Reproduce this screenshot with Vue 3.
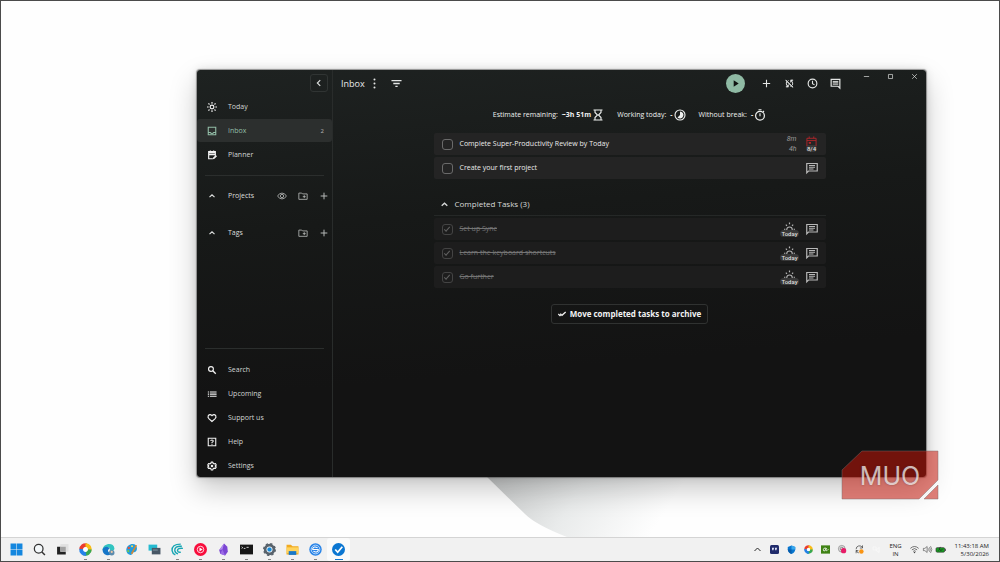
<template>
  <div class="desktop">
    <div class="desktop__area">
      <svg class="wallpaper" viewBox="0 0 240 62" aria-hidden="true">
        <defs>
          <linearGradient id="fold" gradientUnits="userSpaceOnUse" x1="10" y1="0" x2="150" y2="90">
            <stop offset="0" stop-color="#c6c8c8" />
            <stop offset="0.5" stop-color="#e9ebeb" />
            <stop offset="1" stop-color="#fefefe" />
          </linearGradient>
        </defs>
        <path d="M4 0L44 39Q55 50 86 62H240V0Z" fill="url(#fold)" />
      </svg>

      <div class="window">
        <aside class="sidebar">
          <div class="sidebar__top">
            <button type="button" class="collapse" aria-label="Collapse"><Icon name="left" /></button>
          </div>

          <nav class="nav">
            <a
              v-for="item in mainNav"
              :key="item.label"
              href="#"
              class="nav__item"
              :class="{ 'nav__item--active': item.active }"
            >
              <Icon :name="item.icon" />
              <span class="nav__label">{{ item.label }}</span>
              <span v-if="item.count" class="nav__count">{{ item.count }}</span>
            </a>
          </nav>

          <div class="divider"></div>

          <div v-for="group in groups" :key="group.label" class="group">
            <button type="button" class="group__toggle">
              <Icon name="up" />
              <span class="nav__label">{{ group.label }}</span>
            </button>
            <button v-for="a in group.actions" :key="a" type="button" class="group__action" :aria-label="a">
              <Icon :name="a" />
            </button>
          </div>

          <div class="sidebar__spacer"></div>
          <div class="divider"></div>

          <nav class="nav">
            <a v-for="item in bottomNav" :key="item.label" href="#" class="nav__item">
              <Icon :name="item.icon" />
              <span class="nav__label">{{ item.label }}</span>
            </a>
          </nav>
        </aside>

        <main class="main">
          <header class="header">
            <h1 class="header__title">Inbox</h1>
            <button type="button" class="header__btn header__btn--narrow" aria-label="More"><Icon name="dots" /></button>
            <button type="button" class="header__btn" aria-label="Filter"><Icon name="filter" /></button>
            <div class="header__spacer"></div>
            <button type="button" class="play" aria-label="Start tracking"><Icon name="play" /></button>
            <button v-for="a in headerActions" :key="a" type="button" class="header__btn" :aria-label="a">
              <Icon :name="a" />
            </button>
            <div class="controls">
              <button v-for="c in windowControls" :key="c" type="button" class="controls__btn" :aria-label="c">
                <Icon :name="c" />
              </button>
            </div>
          </header>

          <div class="content">
            <div class="stats">
              <div v-for="s in stats" :key="s.label" class="stat">
                <span>{{ s.label }}</span>
                <span class="stat__value"><b>{{ s.value }}</b><Icon :name="s.icon" /></span>
              </div>
            </div>

            <div class="tasks">
              <div v-for="task in tasks" :key="task.title" class="task">
                <label class="task__label">
                  <input type="checkbox" class="task__check" />
                  <span>{{ task.title }}</span>
                </label>
                <div v-if="task.spent" class="task__time">
                  <span>{{ task.spent }}</span>
                  <span>{{ task.estimate }}</span>
                </div>
                <button v-if="task.due" type="button" class="badge badge--due">
                  <Icon name="calendar" />
                  <span class="badge__text">{{ task.due }}</span>
                </button>
                <button v-else type="button" class="task__note" aria-label="Notes"><Icon name="note" /></button>
              </div>
            </div>

            <button type="button" class="done-toggle">
              <Icon name="up" />
              <span>Completed Tasks ({{ doneTasks.length }})</span>
            </button>

            <div class="tasks tasks--done">
              <div v-for="title in doneTasks" :key="title" class="task task--done">
                <label class="task__label">
                  <input type="checkbox" class="task__check" checked />
                  <span>{{ title }}</span>
                </label>
                <button type="button" class="badge">
                  <Icon name="sunrise" />
                  <span class="badge__text">Today</span>
                </button>
                <button type="button" class="task__note" aria-label="Notes"><Icon name="note" /></button>
              </div>
            </div>

            <button type="button" class="archive">
              <Icon name="doneAll" />
              <span>Move completed tasks to archive</span>
            </button>
          </div>
        </main>
      </div>

      <div class="logo">
        <svg class="logo__shape" viewBox="0 0 98 52" aria-hidden="true">
          <path d="M21 1H97V30L78 49H1V20Z" fill="#c41408" fill-opacity="0.54" stroke="#7b6a6a" stroke-opacity="0.45" />
          <path d="M97 35V49H83Z" fill="#c41408" fill-opacity="0.54" stroke="#7b6a6a" stroke-opacity="0.45" />
        </svg>
        <span class="logo__text">MUO</span>
      </div>
    </div>

    <footer class="taskbar">
      <button
        v-for="app in apps"
        :key="app.name"
        type="button"
        class="app"
        :class="{ 'app--open': app.open, 'app--active': app.active }"
        :aria-label="app.name"
      >
        <Icon :name="app.name" />
      </button>
      <div class="taskbar__spacer"></div>
      <button v-for="t in tray" :key="t" type="button" class="tray" :aria-label="t"><Icon :name="t" /></button>
      <div class="lang"><span>ENG</span><span>IN</span></div>
      <Icon v-for="s in system" :key="s" :name="s" class="system" />
      <div class="clock"><span>11:43:18 AM</span><span>5/30/2026</span></div>
    </footer>
  </div>
</template>

<script setup>
import { h } from 'vue'

const mainNav = [
  { label: 'Today', icon: 'sun' },
  { label: 'Inbox', icon: 'inbox', active: true, count: 2 },
  { label: 'Planner', icon: 'planner' },
]

const groups = [
  { label: 'Projects', actions: ['eye', 'folder', 'plus'] },
  { label: 'Tags', actions: ['folder', 'plus'] },
]

const bottomNav = [
  { label: 'Search', icon: 'search' },
  { label: 'Upcoming', icon: 'list' },
  { label: 'Support us', icon: 'heart' },
  { label: 'Help', icon: 'help' },
  { label: 'Settings', icon: 'gear' },
]

const headerActions = ['plus', 'syncOff', 'clock', 'comment']
const windowControls = ['minimize', 'maximize', 'close']

const stats = [
  { label: 'Estimate remaining:', value: '~3h 51m', icon: 'hourglass' },
  { label: 'Working today:', value: '-', icon: 'timelapse' },
  { label: 'Without break:', value: '-', icon: 'timer' },
]

const tasks = [
  { title: 'Complete Super-Productivity Review by Today', spent: '8m', estimate: '4h', due: '8/4' },
  { title: 'Create your first project' },
]

const doneTasks = ['Set up Sync', 'Learn the keyboard shortcuts', 'Go further']

const apps = [
  { name: 'start' },
  { name: 'find' },
  { name: 'taskView' },
  { name: 'chromatic', open: true },
  { name: 'edge', open: true },
  { name: 'paint' },
  { name: 'remote' },
  { name: 'waves', open: true },
  { name: 'music', open: true },
  { name: 'crystal', open: true },
  { name: 'terminal', open: true },
  { name: 'settings', open: true },
  { name: 'explorer', open: true },
  { name: 'syncBlue', open: true },
  { name: 'tick', open: true, active: true },
]

const tray = ['trayUp', 'quote', 'shield', 'chromatic', 'script', 'record', 'update', 'ghost']
const system = ['wifi', 'volume', 'battery']

const line = (d, width = 2) => `<path d="${d}" fill="none" stroke="currentColor" stroke-width="${width}"/>`
const fill = (d, color = 'currentColor') => `<path d="${d}" fill="${color}"/>`

// All icons share a 24 x 24 grid
const icons = {
  left: line('M15 5L8 12L15 19', 2.8),
  up: line('M4.500 15.500L12 8.500L19.500 15.500', 3.6),
  sun: '<circle cx="12" cy="12" r="4.500" fill="none" stroke="currentColor" stroke-width="2.800"/>' +
    line('M12 0V4M12 20V24M0 12H4M20 12H24M3.500 3.500L6 6M18 18L20.500 20.500M3.500 20.500L6 18M18 6L20.500 3.500', 2.8),
  inbox: line('M3 3H21V21H3ZM3 15.500H8Q9 18 12 18Q15 18 16 15.500H21', 2.6),
  planner: line('M14 21H4V4H20V14M4 7H20M4 11H20M8 1V5M16 1V5', 2.8) + fill('M14 22L15 18L21 12L24 15L18 21Z'),
  eye: line('M1.500 12Q5 5 12 5Q19 5 22.500 12Q19 19 12 19Q5 19 1.500 12Z') +
    '<circle cx="12" cy="12" r="4" fill="none" stroke="currentColor" stroke-width="2"/>',
  folder: line('M2 5H9L11 7H22V20H2ZM15 10V17M11.500 13.500H18.500'),
  plus: line('M12 4V20M4 12H20', 2.4),
  search: '<circle cx="9.500" cy="9.500" r="5.800" fill="none" stroke="currentColor" stroke-width="2.800"/>' + line('M14 14L21 21', 3.2),
  list: fill('M2 6H5V8.500H2ZM2 11H5V13.500H2ZM2 16H5V18.500H2ZM7 6H23V8.500H7ZM7 11H23V13.500H7ZM7 16H23V18.500H7Z'),
  heart: line('M12 20.500L5 14Q1 10 3 6.500Q7 1.500 12 6.500Q17 1.500 21 6.500Q23 10 19 14Z', 2.8),
  help: line('M3 3H21V21H3ZM9 9.500Q9 7 12 7Q15 7 15 9.500Q15 11 12 13V14.500M12 16V18.500', 2.6),
  gear: '<path fill="none" stroke="currentColor" stroke-width="2.800" stroke-linejoin="round" d="M10 2.500H14L14.600 5.500L17.300 7L20.200 6L22.200 9.500L20 11.500V12.500L22.200 14.500L20.200 18L17.300 17L14.600 18.500L14 21.500H10L9.400 18.500L6.700 17L3.800 18L1.800 14.500L4 12.500V11.500L1.800 9.500L3.800 6L6.700 7L9.400 5.500Z"/><circle cx="12" cy="12" r="3" fill="currentColor"/>',
  dots: '<g fill="currentColor"><circle cx="12" cy="3.500" r="2.200"/><circle cx="12" cy="12" r="2.200"/><circle cx="12" cy="20.500" r="2.200"/></g>',
  filter: line('M1 5.500H23M5 12H19M9.500 18.500H14.500', 2.8),
  play: fill('M8 5V19L19 12Z'),
  syncOff: fill('M10 6.350V4.260c-.8.210-1.550.540-2.230.960l1.460 1.460c.250-.120.500-.240.770-.330zM2.860 5.410l2.360 2.360C4.450 8.990 4 10.440 4 12c0 2.210.910 4.200 2.360 5.640L4 20h6v-6l-2.240 2.240C6.680 15.150 6 13.660 6 12c0-1 .250-1.940.680-2.770l8.080 8.080c-.250.130-.500.250-.770.340v2.090c.800-.210 1.550-.540 2.230-.960l2.360 2.360 1.270-1.270L4.140 4.140zM20 4h-6v6l2.240-2.240C17.320 8.850 18 10.340 18 12c0 1-.250 1.940-.680 2.770l1.460 1.460C19.550 15.010 20 13.560 20 12c0-2.210-.910-4.200-2.360-5.640L20 4z') +
    line('M4 4L20 20M9 14V19H4M15 10V5H20', 1.6),
  clock: '<circle cx="12" cy="12" r="9.500" fill="none" stroke="currentColor" stroke-width="2.500"/>' + line('M12 6V12.500L16.500 15', 2.4),
  comment: line('M2.500 3H21.500V22L17.500 18H2.500Z', 2.6) + line('M6 7.500H18M6 10.500H18M6 13.500H18', 2),
  minimize: line('M3 12H21', 2.4),
  maximize: line('M5 5H19V19H5Z', 2.4),
  close: line('M4 4L20 20M20 4L4 20', 2.4),
  hourglass: line('M3 2H21M3 22H21M6 2V7L11 12L6 17V22M18 2V7L13 12L18 17V22', 2.2),
  timelapse: '<circle cx="12" cy="12" r="10" fill="none" stroke="currentColor" stroke-width="2.200"/>' + fill('M12 5A7 7 0 1 1 7 17L12 12Z'),
  timer: '<circle cx="12" cy="13.500" r="8.800" fill="none" stroke="currentColor" stroke-width="2.400"/>' + line('M9 1.500H15M12 8.500V14.500M18 6L20 4', 2.2),
  calendar: line('M2 5H22V22H2ZM2 10H22M7 1V5M17 1V5', 2) + fill('M6 13H11V17H6Z'),
  note: line('M1.500 21.500V3H22.500V18H5Z', 2.4) + line('M6 7H18M6 10.500H18M6 14H15', 2),
  sunrise: line('M6 21V19A6 6 0 0 1 18 19V21', 2.4) +
    line('M12 3V7M4 8L6.500 10.500M20 8L17.500 10.500M0 18H3M21 18H24', 2.6),
  doneAll: line('M1 12L6 17L9 14M7 11L12 16L23 6', 3.8),

  start: fill('M1 1H11.500V11.500H1ZM12.500 1H23V11.500H12.500ZM1 12.500H11.500V23H1ZM12.500 12.500H23V23H12.500Z', '#1487df'),
  find: '<circle cx="10.500" cy="10.500" r="8" fill="#f4f8fa" stroke="#333" stroke-width="2.300"/><path d="M16.500 16.500L22 22" stroke="#333" stroke-width="2.800"/>',
  taskView: fill('M8 2H23V16H8Z', '#e1e1e1') + fill('M2 7H8V16H18V21H2Z', '#222') + fill('M8 7H18V16H8Z', '#a2a2a2'),
  chromatic: '<g fill="none" stroke-width="7"><path d="M4 12A8 8 0 0 1 14 4.200" stroke="#eb3c2f"/><path d="M12 4A8 8 0 0 1 19 16" stroke="#f9bc17"/><path d="M20 12A8 8 0 0 1 9 19.400" stroke="#37a852"/><path d="M13 20A8 8 0 0 1 4 11" stroke="#2482e8"/></g><circle cx="12" cy="12" r="4" fill="#fff"/>',
  edge: fill('M1 13C1 0 22-3 23 10C23 14 18 16 14 14C17 9 10 6 6 9Z', '#32c4c0') +
    fill('M1 12C4 5 13 6 14 11C10 11 10 17 15 18Q18 19 21 17C15 26 1 24 1 12Z', '#1676c8') +
    '<circle cx="18" cy="18" r="5" fill="#5b8bae"/><circle cx="18" cy="16.500" r="2" fill="#ecc6a5"/>',
  paint: fill('M12 2C24 0 25 16 17 17C13 17 15 22 10 22C0 21-1 5 12 2Z', '#219cdf') +
    '<circle cx="7" cy="9" r="2.200" fill="#e9533a"/><circle cx="13" cy="6" r="2" fill="#f9d64a"/><circle cx="6" cy="15" r="2" fill="#70c84f"/>' +
    '<path d="M21 4L12 20" stroke="#d48733" stroke-width="3"/>',
  remote: fill('M1 3H17V14H1Z', '#25bad0') + fill('M7 9H23V21H7Z', '#485765') + fill('M9 12H18V14H9Z', '#7a929f'),
  waves: '<g fill="none" stroke="#16a5b3" stroke-width="2.600"><path d="M18 2Q1 2 2 14Q3 20 8 22"/><path d="M20 6Q6 5 7 14Q8 19 13 20"/><path d="M22 10Q12 9 12 14Q13 18 18 17"/></g>',
  music: '<circle cx="12" cy="12" r="12" fill="#f80d3c"/><circle cx="12" cy="12" r="6" fill="none" stroke="#fff" stroke-width="1.500"/>' + fill('M10 8.500L16 12L10 15.500Z', '#fff'),
  crystal: fill('M13 1L19 7L20 16L15 23L6 20L4 13Z', '#7b46d3') + fill('M13 1L10 12L4 13Z', '#b18bef') + fill('M10 12L15 23L6 20Z', '#9b6ce6'),
  terminal: fill('M0 3H24V21H0Z', '#171717') + '<path d="M3 7L5 8.500L3 10M7 10H10M12 8H16" fill="none" stroke="#eee" stroke-width="1.600"/>',
  settings: '<circle cx="12" cy="12" r="8" fill="none" stroke="#59636c" stroke-width="5"/><circle cx="12" cy="12" r="10.500" fill="none" stroke="#59636c" stroke-width="3" stroke-dasharray="4.200 4.050"/><circle cx="12" cy="12" r="5" fill="#c9e2f3"/><circle cx="12" cy="12" r="3.800" fill="#168bdb"/>',
  explorer: fill('M1 3H9L12 6H23V21H1Z', '#f1aa20') + fill('M1 8H23V19H1Z', '#ffd35c') + fill('M5 15H19V22H5Z', '#1978c8'),
  syncBlue: '<circle cx="12" cy="12" r="11.500" fill="#2783e8"/><g fill="none" stroke="#fff" stroke-width="2"><circle cx="12" cy="12" r="8" stroke-width="1.200"/><path d="M6.500 11Q9 5 16 9M17.500 13Q15 19 8 15M6 12H18"/></g>',
  tick: '<circle cx="12" cy="12" r="12" fill="#0b76d1"/><path d="M6 12L10.500 17L19 7" fill="none" stroke="#fff" stroke-width="3.200"/>',

  trayUp: line('M4 16L12 8L20 16', 2.6),
  quote: '<rect width="24" height="24" rx="4" fill="#202b6b"/>' + fill('M5 7H11L9 14H6ZM13 7H19L17 14H14Z', '#dce0f6'),
  shield: fill('M12 1L22 5V12Q21 20 12 24Q3 20 2 12V5Z', '#0876cf') + fill('M12 1L22 5V12H12Z', '#38a8ee') + fill('M2 12H12V24Q3 20 2 12Z', '#075cab'),
  script: '<rect y="1" width="24" height="22" fill="#3f8214"/><path d="M13 8Q6 7 6 13Q7 18 11 15L14 8Q12 17 16 15L20 11" fill="none" stroke="#fff" stroke-width="2"/>',
  record: '<circle cx="10" cy="10" r="9" fill="#ddd" stroke="#777" stroke-width="1.600"/><circle cx="10" cy="10" r="4" fill="none" stroke="#777" stroke-width="2"/><circle cx="15" cy="15" r="7" fill="#e71c67"/>',
  update: '<path d="M3 11A9 9 0 0 1 20 7M20 1V8H13M3 13A9 9 0 0 0 10 21M3 22V15H9" fill="none" stroke="#444" stroke-width="2"/><circle cx="17" cy="17" r="6" fill="#f99413"/>',
  ghost: '<path d="M3 5H11V13H3ZM11 14L19 6V20L11 14" fill="none" stroke="#fafafa" stroke-width="2"/>',
  wifi: '<g fill="none" stroke="#444" stroke-width="2"><path d="M1 9Q12-1 23 9M5 13Q12 6 19 13M8.500 17Q12 13.500 15.500 17"/></g><circle cx="12" cy="20" r="2" fill="#444"/>',
  volume: '<path d="M1 9H5L11 4V20L5 15H1ZM14 9Q17 12 14 15M17 6Q22 12 17 18M20 3Q27 12 20 21" fill="none" stroke="#555" stroke-width="1.800"/>',
  battery: '<rect x="0" y="7" width="23" height="12" rx="3" fill="#169d20" stroke="#333" stroke-width="1.800"/><path d="M25 10V16M8 11L12 5M6 15L10 11L13 15L18 10" fill="none" stroke="#222" stroke-width="2"/>',
}

function Icon(props) {
  return h('svg', { viewBox: '0 0 24 24', class: 'icon', 'aria-hidden': 'true', innerHTML: icons[props.name] })
}
Icon.props = ['name']
</script>

<style>
body {
  margin: 0;
  background: #fff;
}
</style>

<style scoped>
.desktop {
  display: flex;
  flex-direction: column;
  box-sizing: border-box;
  height: 100vh;
  border: 1px solid #4b4b4b;
  font-family: "Open Sans", "Noto Sans", sans-serif;
  font-size: 7px;
  line-height: 10px;
  color: #dcdedd;
  background: #fefefe;
}

.desktop__area {
  position: relative;
  flex: 1;
  min-height: 0;
}

.wallpaper {
  position: absolute;
  left: 480px;
  bottom: 0;
  width: 240px;
  height: 62px;
}

button {
  display: inline-flex;
  align-items: center;
  justify-content: center;
  padding: 0;
  border: 0;
  background: none;
  color: inherit;
  font: inherit;
  cursor: pointer;
}

.icon {
  display: block;
  flex-shrink: 0;
  width: 10px;
  height: 10px;
  overflow: visible;
}

.window {
  position: absolute;
  top: 69px;
  left: 196px;
  right: 73px;
  bottom: 60px;
  display: flex;
  border-radius: 3px;
  background: linear-gradient(175deg, #1e2221 0, #171918 35%, #131313 70%);
  box-shadow: 0 0 1px 1px rgba(60, 60, 60, 0.5), 0 12px 28px rgba(0, 0, 0, 0.22), 0 0 10px rgba(0, 0, 0, 0.12);
}

.sidebar {
  display: flex;
  flex-direction: column;
  box-sizing: border-box;
  width: 136px;
  border-right: 1px solid #292c2b;
}

.sidebar__top {
  display: flex;
  justify-content: flex-end;
  padding: 4px 4px 3px;
}

.collapse {
  box-sizing: border-box;
  width: 18px;
  height: 18px;
  border: 1px solid #303433;
  border-radius: 3px;
}

.nav {
  display: flex;
  flex-direction: column;
  gap: 1px;
}

.nav__item {
  display: flex;
  align-items: center;
  height: 23px;
  padding: 0 8px 0 10px;
  border-radius: 3px;
  color: #d2d5d4;
  text-decoration: none;
}

.nav__item .icon {
  color: #f2f2f2;
}

.nav__item--active {
  background: #2c2f2e;
}

.nav__item--active .nav__label,
.nav__item--active .icon {
  color: #93bea8;
}

.nav__label {
  flex: 1;
  margin-left: 11px;
  text-align: left;
}

.nav__count {
  font-size: 6px;
  color: #b4b7b6;
}

.divider {
  height: 1px;
  margin: 9px 8px;
  background: #2b2e2d;
}

.group {
  display: flex;
  align-items: center;
  height: 22px;
  margin-bottom: 15px;
  padding: 0 3px 0 10px;
}

.group__toggle {
  flex: 1;
}

.group__toggle .icon {
  width: 8px;
  height: 8px;
  margin: 0 1px;
}

.group__action {
  width: 11px;
  margin-left: 10px;
  color: #b4b7b6;
}

.sidebar__spacer {
  flex: 1;
}

.main {
  flex: 1;
  min-width: 0;
}

.header {
  display: flex;
  align-items: center;
  height: 27px;
  padding-left: 8px;
}

.header__title {
  margin: 0;
  font-size: 9px;
  font-weight: 500;
  line-height: 12px;
  color: #ebedec;
}

.header__btn {
  width: 23px;
  color: #e4e6e5;
}

.header__btn .icon {
  width: 11px;
  height: 11px;
}

.header__btn--narrow {
  width: 20px;
}

.header__spacer {
  flex: 1;
}

.play {
  width: 19px;
  height: 19px;
  margin-right: 10px;
  border-radius: 50%;
  background: #8fbaa4;
  color: #101312;
}

.play .icon {
  width: 11px;
  height: 11px;
}

.controls {
  display: flex;
  align-self: flex-start;
  margin-left: 7px;
}

.controls__btn {
  width: 24px;
  height: 12px;
}

.controls__btn .icon {
  width: 7px;
  height: 7px;
}

.content {
  display: flex;
  flex-direction: column;
  align-items: center;
  max-width: 392px;
  margin: 0 auto;
}

.stats {
  display: flex;
  align-items: center;
  gap: 13px;
  height: 36px;
  color: #eff1f0;
}

.stat {
  display: flex;
  align-items: center;
  gap: 4px;
}

.stat__value {
  display: flex;
  align-items: center;
  gap: 1px;
}

.stat .icon {
  width: 12px;
  height: 12px;
}

.tasks {
  display: flex;
  flex-direction: column;
  gap: 2px;
  width: 100%;
}

.tasks--done {
  box-sizing: border-box;
  padding-top: 2px;
  border-top: 1px solid #252827;
}

.task {
  display: flex;
  align-items: center;
  box-sizing: border-box;
  height: 22px;
  padding: 0 8px;
  border-radius: 2px;
  background: #242424;
  color: #ebebeb;
}

.task__label {
  display: flex;
  flex: 1;
  align-items: center;
  gap: 7px;
}

.task__check {
  appearance: none;
  display: grid;
  place-items: center;
  box-sizing: border-box;
  width: 11px;
  height: 11px;
  margin: 0;
  border: 1px solid #6a6a6a;
  border-radius: 3px;
}

.task__check:checked::before {
  content: "";
  width: 5px;
  height: 2px;
  margin-bottom: 2px;
  border: solid #616161;
  border-width: 0 0 1px 1px;
  transform: rotate(-48deg);
}

.task__time {
  display: flex;
  flex-direction: column;
  align-items: flex-end;
  margin-right: 9px;
  font-family: Roboto, sans-serif;
  font-size: 7px;
  font-style: italic;
  color: #9a9a9a;
}

.task__note {
  color: #b8b8b8;
}

.task__note .icon {
  width: 12px;
  height: 12px;
}

.task--done {
  background: #1d1d1d;
}

.task--done .task__label {
  color: #747474;
  text-decoration: line-through;
}

.task--done .task__check {
  border-color: #444;
}

.badge {
  position: relative;
  align-items: flex-start;
  width: 20px;
  height: 16px;
  margin-right: 6px;
  color: #b5b5b5;
}

.badge .icon {
  width: 11px;
  height: 11px;
}

.badge--due {
  width: 12px;
  margin-right: 0;
}

.badge--due .icon {
  color: #b3262b;
}

.badge__text {
  position: absolute;
  bottom: 0;
  padding: 0 1px;
  border-radius: 4px;
  background: #383838;
  font-family: Roboto, sans-serif;
  font-size: 6px;
  font-weight: 500;
  line-height: 7px;
  color: #dedede;
}

.done-toggle {
  align-self: flex-start;
  gap: 6px;
  height: 18px;
  margin: 16px 0 2px 6px;
  font-size: 8px;
  color: #d8dad9;
}

.done-toggle .icon {
  width: 9px;
  height: 9px;
}

.archive {
  box-sizing: border-box;
  gap: 4px;
  height: 20px;
  margin-top: 16px;
  padding: 0 6px;
  border: 1px solid #303231;
  border-radius: 3px;
  font-size: 8px;
  font-weight: 700;
  color: #f2f2f2;
}

.archive .icon {
  width: 8px;
  height: 8px;
}

.logo {
  position: absolute;
  right: 60px;
  bottom: 35px;
  display: grid;
  place-items: center;
  width: 98px;
  height: 52px;
}

.logo__shape {
  grid-area: 1 / 1;
  width: 98px;
  height: 52px;
}

.logo__text {
  grid-area: 1 / 1;
  font-family: Inter, "Liberation Sans", sans-serif;
  font-size: 25px;
  font-weight: 400;
  line-height: 30px;
  color: rgba(255, 255, 255, 0.7);
  text-shadow: 0 0 2px rgba(70, 50, 50, 0.5);
}

.taskbar {
  display: flex;
  align-items: center;
  height: 23px;
  padding: 0 10px 0 4px;
  border-top: 1px solid #d4d4d4;
  background: #f1f1f1;
  color: #222;
  font-size: 6px;
  line-height: 8px;
}

.taskbar__spacer {
  flex: 1;
}

.app {
  position: relative;
  width: 23px;
  height: 23px;
  border-radius: 3px;
}

.app .icon {
  width: 13px;
  height: 13px;
}

.app--open::after {
  content: "";
  position: absolute;
  bottom: 1px;
  width: 3px;
  height: 1px;
  background: #858585;
}

.app--active {
  background: #fafafa;
}

.app--active::after {
  width: 8px;
  background: #1478d0;
}

.tray {
  width: 17px;
}

.tray .icon {
  width: 9px;
  height: 9px;
}

.lang {
  display: flex;
  flex-direction: column;
  width: 21px;
  text-align: center;
}

.system {
  width: 9px;
  height: 9px;
  margin-left: 4px;
}

.clock {
  display: flex;
  flex-direction: column;
  width: 44px;
  text-align: right;
}
</style>
